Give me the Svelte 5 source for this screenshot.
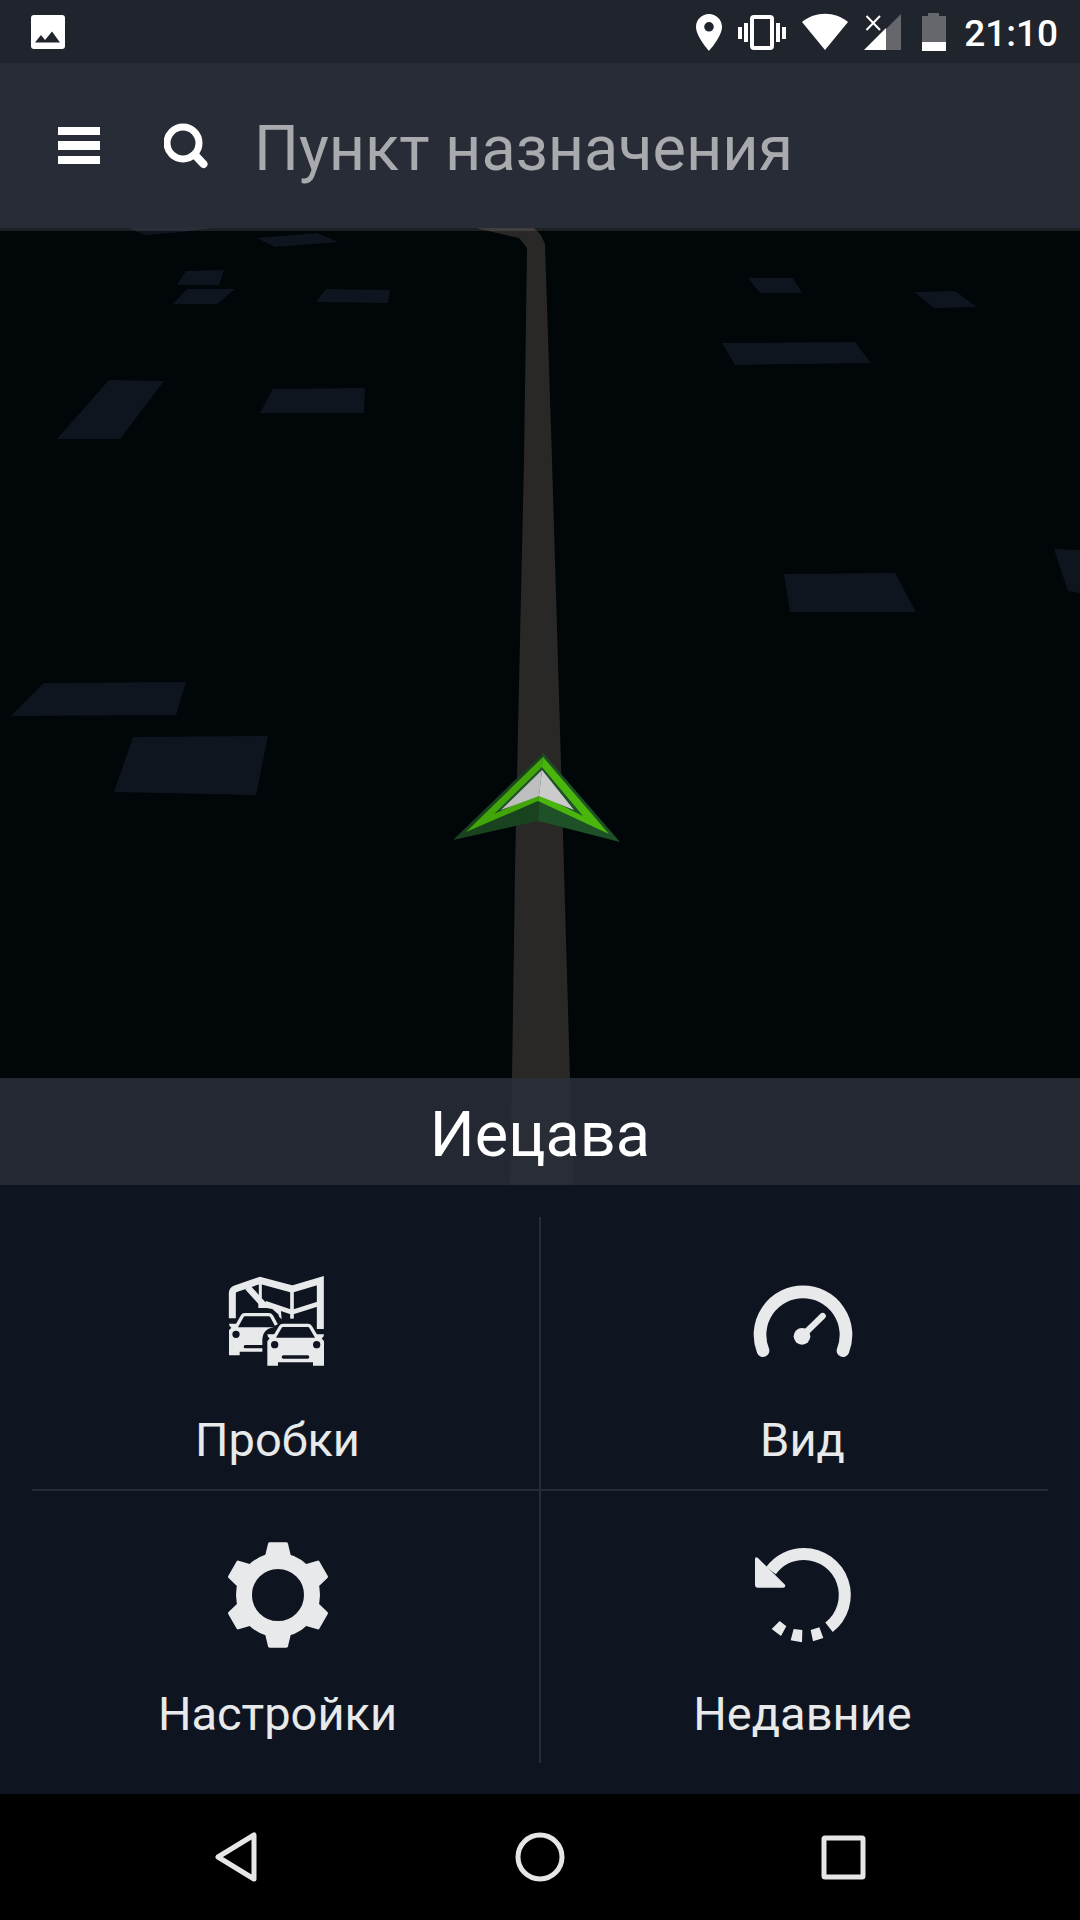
<script>
  let destination = "";

  // ground polygons, in map units
  const blocks = [
    "129,0 145,7 182,4 213,0",
    "257,10 275,19 338,14 317,5",
    "186,43 224,42 219,57 177,57",
    "187,61 235,61 217,76 173,76",
    "326,61 390,62 388,75 316,74",
    "109,152 164,153 120,211 57,211",
    "273,161 365,160 364,185 260,185",
    "748,50 793,50 802,65 760,65",
    "914,64 955,63 977,79 934,80",
    "722,115 855,114 871,135 735,137",
    "784,346 895,345 916,384 790,384",
    "1054,321 1080,322 1080,365 1068,363",
    "44,455 186,454 176,487 11,488",
    "133,509 268,508 256,567 114,564",
  ];

  const items = [
    { id: "traffic", label: "Пробки", viewBox: "42 21 384 384" },
    { id: "view", label: "Вид", viewBox: "54 21 384 384" },
    { id: "settings", label: "Настройки", viewBox: "42 33 384 384" },
    { id: "recent", label: "Недавние", viewBox: "54 33 384 384" },
  ];

  const teeth = [0, 60, 120, 180, 240, 300];
</script>

<div class="app">
  <header class="status">
    <svg class="picture" width="36" height="36" viewBox="0 0 36 36">
      <rect x="1" y="1" width="34" height="34" rx="3" />
      <path class="cut" d="M5 28.500l6-7.500 4 5 7-8.500 8 11z" />
    </svg>
    <svg width="26" height="38" viewBox="0 0 26 38">
      <path
        fill-rule="evenodd"
        d="M13 1C6 1 0 6.500 0 14c0 9.500 13 24 13 24s13-14.500 13-24C26 6.500 20 1 13 1zm0 8a4.800 4.800 0 1 1 0 9.600 4.800 4.800 0 0 1 0-9.600z"
      />
    </svg>
    <svg width="48" height="38" viewBox="0 0 48 38">
      <rect class="line" x="14" y="4" width="20" height="31" rx="2" />
      <path d="M0 14h4v12H0zM6 10h4v19H6zM38 10h4v19h-4zM44 14h4v12h-4z" />
    </svg>
    <svg width="46" height="38" viewBox="0 0 46 38">
      <path d="M0 9C13-2 33-2 46 9L23 37z" />
    </svg>
    <svg width="38" height="38" viewBox="0 0 38 38">
      <path class="dim" d="M37 1v36H22V16z" />
      <path d="M0 37l22-22v22z" />
      <path class="cross" d="M2.500 3L16 17M16 3L2.500 17" />
    </svg>
    <svg class="battery" width="24" height="38" viewBox="0 0 24 38">
      <path class="dim" d="M6 0h11v3h7v26H0V3h6z" />
      <path d="M0 29h24v9H0z" />
    </svg>
    <time>21:10</time>
  </header>

  <form class="search" on:submit|preventDefault>
    <button type="button" aria-label="Меню">
      <svg width="42" height="46" viewBox="0 0 42 46">
        <path d="M0 4h42v8H0zM0 18h42v9H0zM0 33h42v8H0z" />
      </svg>
    </button>
    <button type="submit" aria-label="Поиск">
      <svg width="46" height="46" viewBox="0 0 46 46">
        <circle class="lens" cx="19" cy="20" r="16" />
        <path class="handle" d="M31 32l8.500 9" />
      </svg>
    </button>
    <input
      type="text"
      aria-label="Пункт назначения"
      placeholder="Пункт назначения"
      bind:value={destination}
    />
  </form>

  <main class="map">
    <svg class="scene" viewBox="0 0 1080 957" preserveAspectRatio="xMidYMid slice">
      {#each blocks as points}
        <polygon class="block" {points} />
      {/each}
      <polygon
        class="road"
        points="476,0 519,10 527,20 524,232 518,502 515,642 512,850 510,957 574,957 570,850 564,642 560,502 552,232 545,16 541,7 534,0"
      />
      <g class="marker">
        <polygon fill="#19421f" points="543,525 453,612 538,593" />
        <polygon fill="#1e5127" points="543,525 538,593 620,614" />
        <polygon fill="#42a60a" points="543,529 466,604 538,573" />
        <polygon fill="#4ab60b" points="543,529 538,573 609,606" />
        <polygon fill="#1e5127" points="542,539 494,586 539,566 583,588" />
        <polygon fill="#bebebe" points="542,542 501,582 539,568" />
        <polygon fill="#cbcbcb" points="542,542 539,568 574,582" />
      </g>
    </svg>
    <div class="place">Иецава</div>
  </main>

  <section class="panel">
    <div class="grid">
      {#each items as item}
        <button class="item" type="button">
          <svg width="128" height="128" viewBox={item.viewBox}>
            {#if item.id === "traffic"}
              <g class="stroke">
                <path stroke-width="21" d="M97 205v-75q0-10 10-14l73-25 96 26 85-25v145" />
                <path stroke-width="9" d="M181 100v65" />
                <path stroke-width="11" d="M276 115v91" />
                <path stroke-width="14" d="M196 160l80 27 85-27" />
                <path stroke-width="19" d="M143 112l47 52" />
              </g>
              <path d="M175 154l25 2 42 17 3 35q-9-5-10-15l-18-16-17-3h-25z" />
              <path
                class="stroke"
                stroke-width="10"
                stroke-linejoin="round"
                d="M108 232l19-34q2-4 7-4h72q6 0 9 5l14 26"
              />
              <path
                fill-rule="evenodd"
                d="M87 221h22l4 11h110q-36 4-36 40v33h-68v11H87v-75l7-8q-7-4-7-12zM136 285a5 5 0 0 0 0 10h51v-10zM108 242a11 11 0 1 0 0 22 11 11 0 0 0 0-22z"
              />
              <path
                class="stroke"
                stroke-width="10"
                stroke-linejoin="round"
                d="M221 265l20-34q3-5 8-5h75q5 0 8 5l20 34"
              />
              <path
                fill-rule="evenodd"
                d="M202 253h22l5 10h116l5-10h22q0 8-7 12l7 9v73h-33v-10H234v10h-32v-73l7-9q-7-4-7-12zM224 273a11 11 0 1 0 0 22 11 11 0 0 0 0-22zM350 273a11 11 0 1 0 0 22 11 11 0 0 0 0-22zM250 316a5 5 0 0 0 0 10h73a5 5 0 0 0 0-10z"
              />
            {:else if item.id === "view"}
              <path
                class="stroke"
                stroke-width="38"
                stroke-linecap="round"
                d="M126 302A129 129 0 1 1 366 302"
              />
              <path
                class="stroke"
                stroke-width="19"
                stroke-linecap="round"
                d="M243 259l62-61"
              />
              <circle cx="243" cy="259" r="25" />
            {:else if item.id === "settings"}
              <circle class="stroke" stroke-width="48" cx="234" cy="225" r="102" />
              {#each teeth as angle}
                <path
                  transform="rotate({angle} 234 225)"
                  d="M194 113l10-42q1-4 5-4h50q4 0 5 4l10 42z"
                />
              {/each}
            {:else}
              <path
                class="stroke"
                stroke-width="36"
                d="M150 152A123 123 0 0 1 249 102A123 123 0 0 1 324 322"
              />
              <path
                d="M102 118q0-10 9-4l81 80q3 9-6 9h-75q-9 0-9-9zM176 303l20 16-16 29-28-21zM218 327l26 3-1 37-34-6zM269 330l26-8 12 32-31 10z"
              />
            {/if}
          </svg>
          <span>{item.label}</span>
        </button>
      {/each}
    </div>
  </section>

  <nav>
    <button type="button" aria-label="Назад">
      <svg width="50" height="50" viewBox="0 0 50 50">
        <path d="M43 3v44L7 25z" />
      </svg>
    </button>
    <button type="button" aria-label="Домой">
      <svg width="50" height="50" viewBox="0 0 50 50">
        <circle cx="25" cy="25" r="22" />
      </svg>
    </button>
    <button type="button" aria-label="Обзор">
      <svg width="50" height="50" viewBox="0 0 50 50">
        <rect x="5" y="6" width="39" height="39" rx="1" />
      </svg>
    </button>
  </nav>
</div>

<style>
  :global(body) {
    background: #000;
  }

  .app {
    min-height: 100vh;
    display: flex;
    flex-direction: column;
    font-family: Roboto, "Noto Sans", sans-serif;
    color: #fff;
  }

  button {
    display: flex;
    align-items: center;
    justify-content: center;
    padding: 0;
    border: none;
    background: none;
    color: inherit;
    font: inherit;
    cursor: pointer;
  }

  svg {
    display: block;
    fill: currentColor;
  }

  .status {
    display: flex;
    align-items: center;
    gap: 16px;
    height: 63px;
    padding: 0 22px 0 30px;
    background: #20242c;
  }

  .picture {
    margin-right: auto;
  }

  .battery {
    margin: 0 2px 0 4px;
  }

  .cut {
    fill: #20242c;
  }

  .line {
    fill: none;
    stroke: currentColor;
    stroke-width: 4;
  }

  .dim {
    fill: #66676c;
  }

  .cross {
    stroke: currentColor;
    stroke-width: 2;
  }

  time {
    padding-top: 4px;
    font-size: 37px;
    line-height: 44px;
    font-weight: 500;
  }

  .search {
    position: relative;
    z-index: 1;
    display: flex;
    align-items: center;
    height: 165px;
    padding: 0 58px;
    background: #282c37;
    box-shadow: 0 3px rgba(255, 255, 255, 0.11);
  }

  .search button + button {
    margin-left: 64px;
  }

  .lens {
    fill: none;
    stroke: currentColor;
    stroke-width: 7;
  }

  .handle {
    stroke: currentColor;
    stroke-width: 8;
    stroke-linecap: round;
  }

  input {
    flex: 1;
    min-width: 0;
    margin-left: 44px;
    padding: 6px 0 0;
    border: none;
    outline: none;
    background: none;
    color: #fff;
    font: inherit;
    font-size: 63px;
    line-height: 75px;
  }

  input::placeholder {
    color: #a9aaad;
    opacity: 1;
  }

  .map {
    flex: 1;
    display: grid;
    background: #010609;
  }

  .scene,
  .place {
    grid-area: 1 / 1;
  }

  .scene {
    width: 100%;
    height: 100%;
  }

  .block {
    fill: #0f151f;
  }

  .road {
    fill: #2a2826;
  }

  .place {
    align-self: end;
    padding: 19px 0 13px;
    background: rgba(41, 47, 58, 0.85);
    font-size: 63px;
    line-height: 75px;
    text-align: center;
  }

  .panel {
    padding: 32px 32px 31px;
    background: #0f1520;
    color: #e8e9ea;
  }

  /* the gap shows through as the divider lines */
  .grid {
    display: grid;
    grid-template-columns: 1fr 1fr;
    gap: 2px;
    background: #262d3a;
  }

  .item {
    flex-direction: column;
    justify-content: flex-start;
    gap: 27px;
    height: 272px;
    padding: 40px 16px 0 0;
    background: #0f1520;
    font-size: 47px;
    line-height: 56px;
  }

  .item:nth-child(even) {
    padding: 40px 0 0 16px;
  }

  .stroke {
    fill: none;
    stroke: currentColor;
  }

  nav {
    display: flex;
    height: 126px;
    padding: 0 84px;
    background: #000;
    color: #e6e6e6;
  }

  nav button {
    flex: 1;
  }

  nav svg {
    fill: none;
    stroke: currentColor;
    stroke-width: 5;
    stroke-linejoin: round;
  }
</style>
